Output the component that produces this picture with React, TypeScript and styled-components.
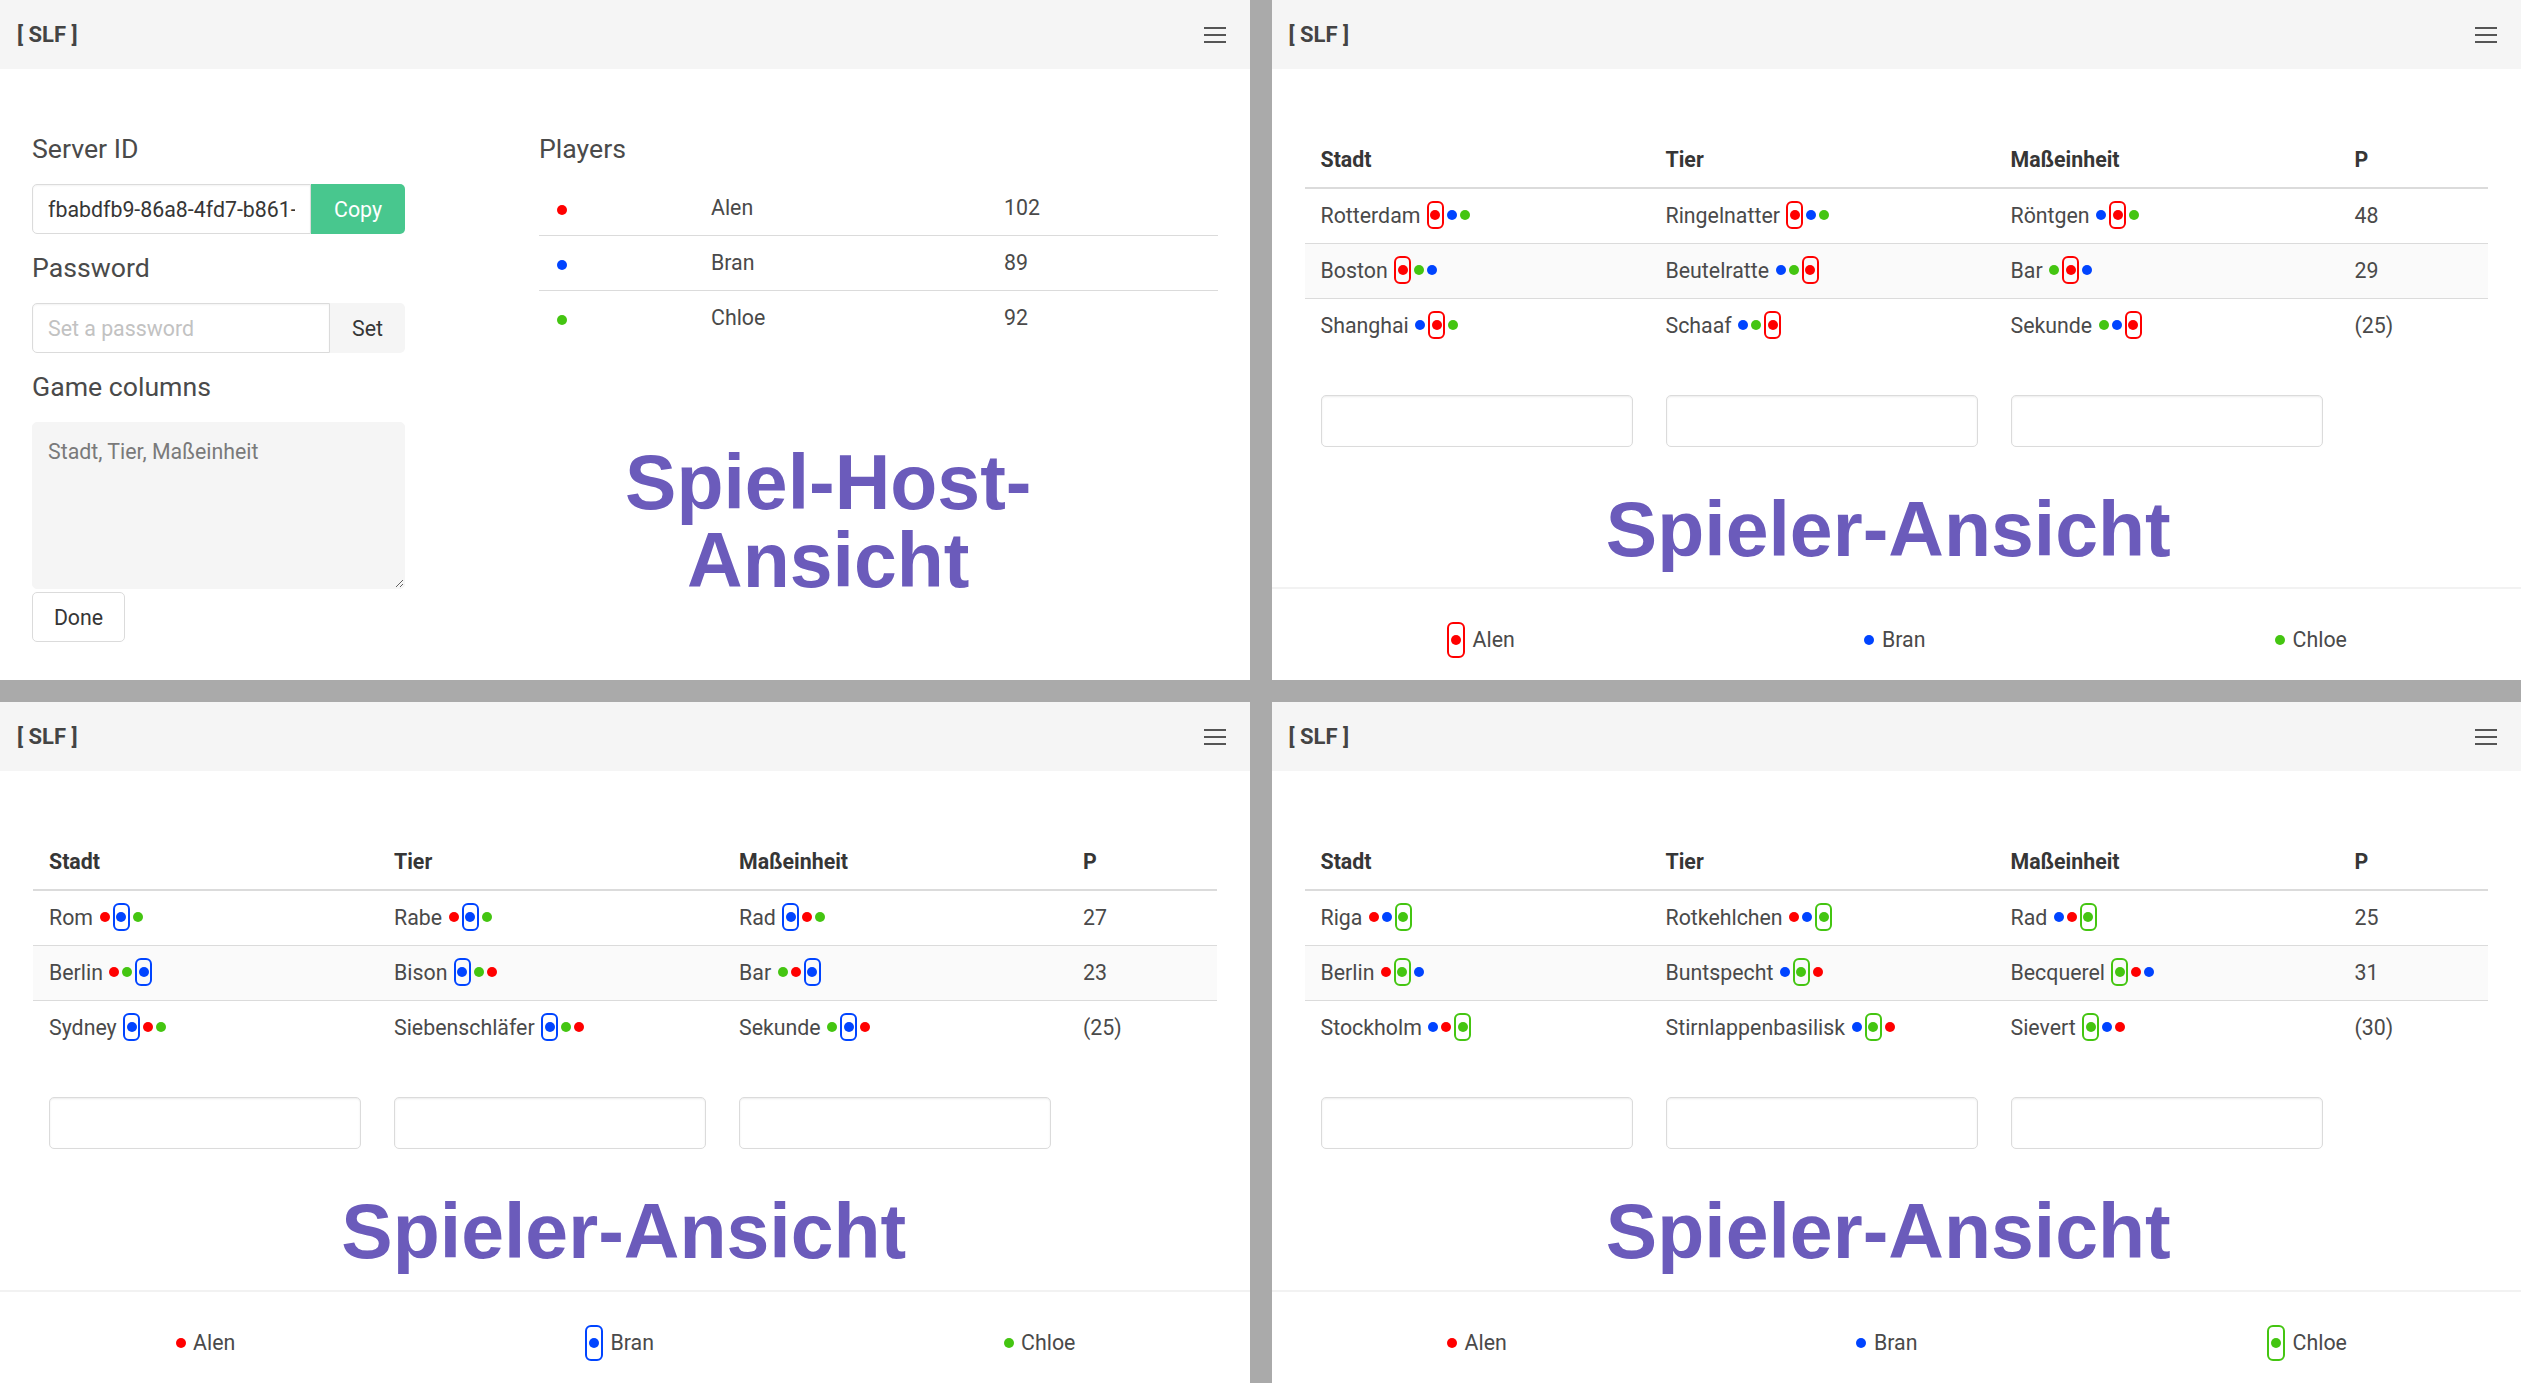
import React from 'react';
import styled, { createGlobalStyle } from 'styled-components';

const GlobalStyle = createGlobalStyle`
  html, body {
    margin: 0;
    padding: 0;
  }
  body {
    background: #aaaaaa;
    font-family: Roboto, "Noto Sans", sans-serif;
    color: #4a4a4a;
  }
  * {
    box-sizing: border-box;
  }
`;

type Player = 'r' | 'b' | 'g';

const COLORS: Record<Player, string> = {
  r: '#ff0000',
  b: '#0044ff',
  g: '#44c511',
};

const NAMES: Record<Player, string> = {
  r: 'Alen',
  b: 'Bran',
  g: 'Chloe',
};

// order in which the players submitted each word, same for every view
const ORDER: string[][] = [
  ['rbg', 'rbg', 'brg'],
  ['rgb', 'bgr', 'grb'],
  ['brg', 'bgr', 'gbr'],
];

interface PlayerView {
  me: Player;
  words: string[][];
  points: string[];
  shift: number;
}

const VIEWS: PlayerView[] = [
  {
    me: 'r',
    words: [
      ['Rotterdam', 'Ringelnatter', 'Röntgen'],
      ['Boston', 'Beutelratte', 'Bar'],
      ['Shanghai', 'Schaaf', 'Sekunde'],
    ],
    points: ['48', '29', '(25)'],
    shift: 16,
  },
  {
    me: 'b',
    words: [
      ['Rom', 'Rabe', 'Rad'],
      ['Berlin', 'Bison', 'Bar'],
      ['Sydney', 'Siebenschläfer', 'Sekunde'],
    ],
    points: ['27', '23', '(25)'],
    shift: 2,
  },
  {
    me: 'g',
    words: [
      ['Riga', 'Rotkehlchen', 'Rad'],
      ['Berlin', 'Buntspecht', 'Becquerel'],
      ['Stockholm', 'Stirnlappenbasilisk', 'Sievert'],
    ],
    points: ['25', '31', '(30)'],
    shift: 16,
  },
];

const COLUMNS = ['Stadt', 'Tier', 'Maßeinheit'];

/* ---------- layout ---------- */

const Screen = styled.div`
  display: grid;
  grid-template-columns: 1fr 1fr;
  grid-template-rows: 680px 681px;
  gap: 22px;
  width: 2521px;
  height: 1383px;
  background: #aaaaaa;
`;

const Panel = styled.section`
  display: flex;
  flex-direction: column;
  min-width: 0;
  background: #ffffff;
  overflow: hidden;
`;

const Navbar = styled.header`
  flex: none;
  height: 69px;
  display: flex;
  align-items: center;
  justify-content: space-between;
  padding: 0 24px 0 17px;
  background: #f5f5f5;
`;

const Brand = styled.span`
  font-size: 22px;
  font-weight: 700;
  color: #444444;
`;

const Burger = styled.div`
  display: flex;
  flex-direction: column;
  gap: 5px;
  width: 22px;

  span {
    display: block;
    height: 2px;
    background: #555555;
  }
`;

/* ---------- dots ---------- */

const Dot = styled.span<{ $color: string }>`
  display: inline-block;
  width: 10px;
  height: 10px;
  margin: 0 1.5px;
  border-radius: 50%;
  background: ${p => p.$color};
`;

const DotBox = styled.span<{ $color: string; $tall?: boolean }>`
  display: inline-flex;
  align-items: center;
  padding: ${p => (p.$tall ? '11px 2px' : '7px 0')};
  margin: 0 1.5px;
  border: 2px solid ${p => p.$color};
  border-radius: 6px;

  ${Dot} {
    margin: 0 ${p => (p.$tall ? '0' : '1.5px')};
  }
`;

const DotGroup = styled.span`
  display: inline-flex;
  align-items: center;
  vertical-align: middle;
  margin-left: 5px;
  margin-top: -4px;
`;

/* ---------- tables ---------- */

const Table = styled.table`
  width: 100%;
  border-collapse: collapse;
  font-size: 21.33px;
  line-height: 32px;
  color: #4a4a4a;

  th {
    text-align: left;
    font-weight: 700;
    color: #363636;
    padding: 11px 16px;
    border-bottom: 2px solid #dbdbdb;
  }

  td {
    padding: 11px 16px;
    border-bottom: 1px solid #dbdbdb;
    white-space: nowrap;
  }

  tbody tr:last-child td {
    border-bottom: none;
  }
`;

const StripedBody = styled.tbody`
  tr:nth-child(even) td {
    background: #fafafa;
  }
`;

const InputCell = styled.td`
  && {
    padding: 42px 16px 0 16px;
    border: none;
  }
`;

const WordInput = styled.input`
  display: block;
  width: 312px;
  height: 52px;
  border: 1px solid #dbdbdb;
  border-radius: 5px;
  box-shadow: inset 0 1px 2px rgba(10, 10, 10, 0.08);
  background: #ffffff;
`;

/* ---------- host view ---------- */

const HostBody = styled.div`
  display: grid;
  grid-template-columns: 373px 1fr;
  column-gap: 134px;
  padding: 65px 32px 0 32px;
`;

const Column = styled.div`
  display: flex;
  flex-direction: column;
  min-width: 0;
`;

const Subtitle = styled.h2<{ $gap?: number }>`
  margin: 0 0 ${p => p.$gap ?? 20}px 0;
  font-size: 26.67px;
  line-height: 30px;
  font-weight: 400;
  color: #4a4a4a;
`;

const Field = styled.div`
  display: flex;
  margin-bottom: 19px;
`;

const TextInput = styled.input<{ $width: number }>`
  width: ${p => p.$width}px;
  height: 50px;
  padding: 0 15px;
  font-family: Roboto, "Noto Sans", sans-serif;
  font-size: 21.33px;
  color: #363636;
  border: 1px solid #dbdbdb;
  border-radius: 5px 0 0 5px;
  box-shadow: inset 0 1px 2px rgba(10, 10, 10, 0.05);
  background: #ffffff;
  outline: none;

  &::placeholder {
    color: #c2c2c2;
  }
`;

const AddonButton = styled.button<{ $primary?: boolean }>`
  flex: 1;
  height: 50px;
  font-family: Roboto, "Noto Sans", sans-serif;
  font-size: 21.33px;
  border: 1px solid transparent;
  border-radius: 0 5px 5px 0;
  background: ${p => (p.$primary ? '#48c78e' : '#f5f5f5')};
  color: ${p => (p.$primary ? '#ffffff' : '#363636')};
`;

const ColumnsArea = styled.textarea`
  display: block;
  width: 100%;
  height: 167px;
  padding: 13px 15px;
  font-family: Roboto, "Noto Sans", sans-serif;
  font-size: 21.33px;
  line-height: 32px;
  color: #7a7a7a;
  background: #f5f5f5;
  border: 1px solid #f5f5f5;
  border-radius: 5px;
  resize: vertical;
  outline: none;
`;

const Button = styled.button`
  width: 93px;
  height: 50px;
  margin-top: 3px;
  font-family: Roboto, "Noto Sans", sans-serif;
  font-size: 21.33px;
  color: #363636;
  background: #ffffff;
  border: 1px solid #dbdbdb;
  border-radius: 5px;
`;

const PlayersTable = styled(Table)`
  td:nth-child(1) {
    width: 156px;
  }
  td:nth-child(2) {
    width: 293px;
  }
`;

/* ---------- annotations ---------- */

const Caption = styled.div<{ $shift?: number }>`
  font-family: "Liberation Sans", Arial, sans-serif;
  font-weight: 700;
  font-size: 77px;
  line-height: 78px;
  color: #6b5bbb;
  text-align: center;
  padding-right: ${p => p.$shift ?? 0}px;
`;

const HostCaption = styled(Caption)`
  margin-top: 98px;
`;

const PlayerCaption = styled(Caption)`
  margin-top: 43px;
`;

/* ---------- player view ---------- */

const PlayerBody = styled.div`
  padding: 64px 33px 0 33px;
`;

const WordsTable = styled(Table)`
  th:nth-child(-n + 2),
  td:nth-child(-n + 2) {
    width: 345px;
  }
  th:nth-child(3),
  td:nth-child(3) {
    width: 344px;
  }
`;

const Legend = styled.footer`
  margin-top: auto;
  flex: none;
  height: 93px;
  display: flex;
  align-items: center;
  justify-content: space-around;
  padding-top: 10px;
  border-top: 2px solid #f2f2f2;
  font-size: 21.33px;
  color: #4a4a4a;
`;

const LegendItem = styled.span`
  display: inline-flex;
  align-items: center;
`;

const LegendName = styled.span`
  margin-left: 6px;
`;

/* ---------- components ---------- */

function Header() {
  return (
    <Navbar>
      <Brand>[ SLF ]</Brand>
      <Burger>
        <span />
        <span />
        <span />
      </Burger>
    </Navbar>
  );
}

function Dots({ order, me }: { order: string; me: Player }) {
  return (
    <DotGroup>
      {order.split('').map(c => {
        const p = c as Player;
        return p === me ? (
          <DotBox key={p} $color={COLORS[p]}>
            <Dot $color={COLORS[p]} />
          </DotBox>
        ) : (
          <Dot key={p} $color={COLORS[p]} />
        );
      })}
    </DotGroup>
  );
}

function HostView() {
  const players: [Player, string][] = [
    ['r', '102'],
    ['b', '89'],
    ['g', '92'],
  ];
  return (
    <Panel>
      <Header />
      <HostBody>
        <Column>
          <Subtitle>Server ID</Subtitle>
          <Field>
            <TextInput $width={279} readOnly value="fbabdfb9-86a8-4fd7-b861-3e0c5a9d27f4" />
            <AddonButton $primary>Copy</AddonButton>
          </Field>
          <Subtitle>Password</Subtitle>
          <Field>
            <TextInput $width={298} placeholder="Set a password" />
            <AddonButton>Set</AddonButton>
          </Field>
          <Subtitle>Game columns</Subtitle>
          <ColumnsArea readOnly value="Stadt, Tier, Maßeinheit" />
          <div>
            <Button>Done</Button>
          </div>
        </Column>
        <Column>
          <Subtitle $gap={17}>Players</Subtitle>
          <PlayersTable>
            <tbody>
              {players.map(([p, score]) => (
                <tr key={p}>
                  <td>
                    <Dot $color={COLORS[p]} />
                  </td>
                  <td>{NAMES[p]}</td>
                  <td>{score}</td>
                </tr>
              ))}
            </tbody>
          </PlayersTable>
          <HostCaption $shift={100}>Spiel-Host-Ansicht</HostCaption>
        </Column>
      </HostBody>
    </Panel>
  );
}

function PlayerPanel({ view }: { view: PlayerView }) {
  return (
    <Panel>
      <Header />
      <PlayerBody>
        <WordsTable>
          <thead>
            <tr>
              {COLUMNS.map(c => (
                <th key={c}>{c}</th>
              ))}
              <th>P</th>
            </tr>
          </thead>
          <StripedBody>
            {view.words.map((row, i) => (
              <tr key={i}>
                {row.map((word, j) => (
                  <td key={j}>
                    {word}
                    <Dots order={ORDER[i][j]} me={view.me} />
                  </td>
                ))}
                <td>{view.points[i]}</td>
              </tr>
            ))}
          </StripedBody>
          <tfoot>
            <tr>
              {COLUMNS.map(c => (
                <InputCell key={c}>
                  <WordInput />
                </InputCell>
              ))}
              <InputCell />
            </tr>
          </tfoot>
        </WordsTable>
        <PlayerCaption $shift={view.shift}>Spieler-Ansicht</PlayerCaption>
      </PlayerBody>
      <Legend>
        {(['r', 'b', 'g'] as Player[]).map(p => (
          <LegendItem key={p}>
            {p === view.me ? (
              <DotBox $color={COLORS[p]} $tall>
                <Dot $color={COLORS[p]} />
              </DotBox>
            ) : (
              <Dot $color={COLORS[p]} />
            )}
            <LegendName>{NAMES[p]}</LegendName>
          </LegendItem>
        ))}
      </Legend>
    </Panel>
  );
}

export default function App() {
  return (
    <>
      <GlobalStyle />
      <Screen>
        <HostView />
        <PlayerPanel view={VIEWS[0]} />
        <PlayerPanel view={VIEWS[1]} />
        <PlayerPanel view={VIEWS[2]} />
      </Screen>
    </>
  );
}
